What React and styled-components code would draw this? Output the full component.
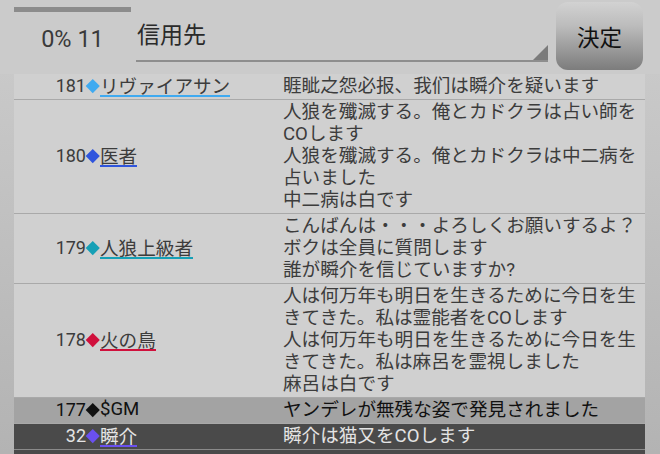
import React from 'react';
import styled, { createGlobalStyle } from 'styled-components';

const GlobalStyle = createGlobalStyle`
	body {
		margin: 0;
		font-family: Roboto, "Noto Sans CJK JP", sans-serif;
	}
`;

const Page = styled.div`
	width: 660px;
	height: 454px;
	overflow: hidden;
	background: linear-gradient(#cdcdcd, #b3b3b3);
`;
Page.displayName = 'Page';

const Header = styled.div`
	height: 74px;
	display: flex;
	align-items: flex-start;
	background: #cbcbcb;
`;
Header.displayName = 'Header';

const CountBox = styled.div`
	width: 117px;
	margin-left: 14px;
	display: flex;
	flex-direction: column;
`;
CountBox.displayName = 'CountBox';

const Progress = styled.div`
	height: 5px;
	margin-top: 7px;
	background: #8c8c8c;
`;
Progress.displayName = 'Progress';

const Count = styled.div`
	margin-top: 13px;
	text-align: center;
	font-family: Roboto, sans-serif;
	font-size: 23.5px;
	line-height: 28px;
	color: #3a3a3a;
`;
Count.displayName = 'Count';

const Spinner = styled.div`
	position: relative;
	width: 412px;
	height: 60px;
	margin-left: 5px;
	border-bottom: 2px solid #8e8e8e;
	box-sizing: content-box;
	font-family: "Noto Sans CJK JP", sans-serif;
	font-size: 23px;
	line-height: 28px;
	color: #2a2a2a;

	span {
		display: block;
		margin-top: 19px;
		margin-left: 1px;
	}

	&::after {
		content: '';
		position: absolute;
		right: 0;
		bottom: 0;
		border-style: solid;
		border-width: 0 0 15px 15px;
		border-color: transparent transparent #7b7b7b transparent;
	}
`;
Spinner.displayName = 'Spinner';

const DecideButton = styled.button`
	width: 87px;
	height: 68px;
	margin: 2px 0 0 8px;
	padding: 0;
	border: none;
	border-radius: 12px;
	background: linear-gradient(#d2d2d2, #bcbcbc 35%, #7c7c7c);
	font-family: "Noto Sans CJK JP", sans-serif;
	font-size: 22.5px;
	color: #111;
`;
DecideButton.displayName = 'DecideButton';

const List = styled.div`
	margin: 0 15px 0 14px;
	background: #d0d0d0;
`;
List.displayName = 'List';

const rowBg = {
	normal: '#d0d0d0',
	system: '#a3a3a3',
	self: '#4a4a4a'
};

const Row = styled.div`
	display: grid;
	grid-template-columns: 269px 1fr;
	min-height: 22px;
	padding: 1px 0 2px;
	border-bottom: 1px solid ${props => (props.kind === 'self' ? '#8a8a8a' : '#a9a9a9')};
	background: ${props => rowBg[props.kind]};
	color: ${props =>
		props.kind === 'self' ? '#e4e4e4' : props.kind === 'system' ? '#111' : '#3c3c3c'};
	font-size: 18.6px;
	line-height: 22px;
`;
Row.displayName = 'Row';

const Speaker = styled.div`
	display: flex;
	align-items: center;
	white-space: nowrap;
`;
Speaker.displayName = 'Speaker';

const Num = styled.span`
	width: 72px;
	text-align: right;
	font-family: Roboto, sans-serif;
	font-size: 18px;
`;
Num.displayName = 'Num';

const Diamond = styled.span`
	display: inline-block;
	width: 9.5px;
	height: 9.5px;
	margin: 0 2.5px 0 2px;
	transform: rotate(45deg);
	background: ${props => props.color};
`;
Diamond.displayName = 'Diamond';

const Name = styled.span`
	font-family: ${props =>
		props.latin ? 'Roboto, sans-serif' : '"Noto Sans CJK JP", sans-serif'};
	font-size: 18.6px;
	line-height: 20px;
	border-bottom: 2px solid ${props => props.color || 'transparent'};
`;
Name.displayName = 'Name';

const Message = styled.div`
	font-family: Roboto, "Noto Sans CJK JP", sans-serif;
	white-space: pre-line;
	padding-right: 4px;
`;
Message.displayName = 'Message';

const logs = [
	{
		no: 181,
		name: 'リヴァイアサン',
		color: '#40aaf0',
		text: '睚眦之怨必报、我们は瞬介を疑います'
	},
	{
		no: 180,
		name: '医者',
		color: '#2f55dd',
		text:
			'人狼を殲滅する。俺とカドクラは占い師をCOします\n人狼を殲滅する。俺とカドクラは中二病を占いました\n中二病は白です'
	},
	{
		no: 179,
		name: '人狼上級者',
		color: '#16a0b6',
		text:
			'こんばんは・・・よろしくお願いするよ？\nボクは全員に質問します\n誰が瞬介を信じていますか?'
	},
	{
		no: 178,
		name: '火の鳥',
		color: '#d0103c',
		text:
			'人は何万年も明日を生きるために今日を生きてきた。私は霊能者をCOします\n人は何万年も明日を生きるために今日を生きてきた。私は麻呂を霊視しました\n麻呂は白です'
	},
	{
		no: 177,
		name: '$GM',
		color: '#111',
		kind: 'system',
		latin: true,
		plain: true,
		text: 'ヤンデレが無残な姿で発見されました'
	},
	{
		no: 32,
		name: '瞬介',
		color: '#6a50f0',
		kind: 'self',
		text: '瞬介は猫又をCOします'
	}
];

export default function App() {
	return (
		<Page>
			<GlobalStyle />
			<Header>
				<CountBox>
					<Progress />
					<Count>0% 11</Count>
				</CountBox>
				<Spinner>
					<span>信用先</span>
				</Spinner>
				<DecideButton>決定</DecideButton>
			</Header>
			<List>
				{logs.map(log => (
					<Row key={log.no} kind={log.kind || 'normal'}>
						<Speaker>
							<Num>{log.no}</Num>
							<Diamond color={log.color} />
							<Name color={log.plain ? null : log.color} latin={log.latin}>
								{log.name}
							</Name>
						</Speaker>
						<Message>{log.text}</Message>
					</Row>
				))}
				{/* next entry is scrolled below the fold */}
				<Row kind="self" />
			</List>
		</Page>
	);
}
